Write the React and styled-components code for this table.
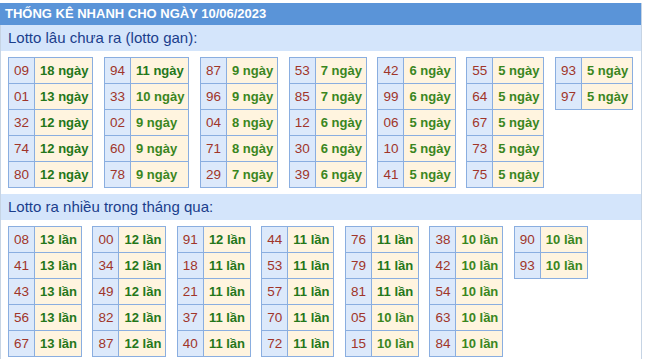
import React from "react";
import styled, { createGlobalStyle } from "styled-components";

const GlobalStyle = createGlobalStyle`
  body {
    margin: 0;
    background: #ffffff;
    font-family: "Liberation Sans", Arial, sans-serif;
  }
`;

const Page = styled.div`
  padding-top: 3px;
`;

const Box = styled.div`
  width: 640px;
  min-height: calc(100vh - 3px);
  border-left: 1px solid #c6d4e4;
  border-right: 1px solid #c6d4e4;
`;

const TitleBar = styled.div`
  height: 22px;
  line-height: 22px;
  background: #5a94d8;
  color: #ffffff;
  font-size: 13px;
  font-weight: bold;
  padding-left: 5px;
  margin-left: -1px;
`;

const SubHead = styled.div`
  height: 26px;
  line-height: 26px;
  background: #d4e5fb;
  color: #1b3e8c;
  font-size: 15px;
  padding-left: 7px;
`;

const Tables = styled.div`
  display: flex;
  align-items: flex-start;
  gap: 10.5px;
  padding: 6px 7px 6px;
`;

const Grid = styled.table`
  border-collapse: collapse;
  font-size: 13px;
`;

const Num = styled.td`
  height: 25px;
  padding: 0 5px;
  border: 1px solid #8aaee0;
  background: #dce9fb;
  color: #a0352a;
  font-size: 13.5px;
  text-align: center;
`;

const Val = styled.td`
  height: 25px;
  padding: 0 4px 0 5px;
  border: 1px solid #8aaee0;
  background: #fff4df;
  color: ${p => (p.$big ? "#24771a" : "#3a861e")};
  font-weight: bold;
  white-space: nowrap;
`;

const gan = [
  [["09", 18], ["01", 13], ["32", 12], ["74", 12], ["80", 12]],
  [["94", 11], ["33", 10], ["02", 9], ["60", 9], ["78", 9]],
  [["87", 9], ["96", 9], ["04", 8], ["71", 8], ["29", 7]],
  [["53", 7], ["85", 7], ["12", 6], ["30", 6], ["39", 6]],
  [["42", 6], ["99", 6], ["06", 5], ["10", 5], ["41", 5]],
  [["55", 5], ["64", 5], ["67", 5], ["73", 5], ["75", 5]],
  [["93", 5], ["97", 5]],
];

const nhieu = [
  [["08", 13], ["41", 13], ["43", 13], ["56", 13], ["67", 13]],
  [["00", 12], ["34", 12], ["49", 12], ["82", 12], ["87", 12]],
  [["91", 12], ["18", 11], ["21", 11], ["37", 11], ["40", 11]],
  [["44", 11], ["53", 11], ["57", 11], ["70", 11], ["72", 11]],
  [["76", 11], ["79", 11], ["81", 11], ["05", 10], ["15", 10]],
  [["38", 10], ["42", 10], ["54", 10], ["63", 10], ["84", 10]],
  [["90", 10], ["93", 10]],
];

const Section = ({ title, data, unit }) => (
  <>
    <SubHead>{title}</SubHead>
    <Tables>
      {data.map((col, i) => (
        <Grid key={i}>
          <tbody>
            {col.map(([n, c]) => (
              <tr key={n}>
                <Num>{n}</Num>
                <Val $big={c >= 11}>{c} {unit}</Val>
              </tr>
            ))}
          </tbody>
        </Grid>
      ))}
    </Tables>
  </>
);

export default function App() {
  return (
    <Page>
      <GlobalStyle />
      <Box>
        <TitleBar>THỐNG KÊ NHANH CHO NGÀY 10/06/2023</TitleBar>
        <Section title="Lotto lâu chưa ra (lotto gan):" data={gan} unit="ngày" />
        <Section title="Lotto ra nhiều trong tháng qua:" data={nhieu} unit="lần" />
      </Box>
    </Page>
  );
}
